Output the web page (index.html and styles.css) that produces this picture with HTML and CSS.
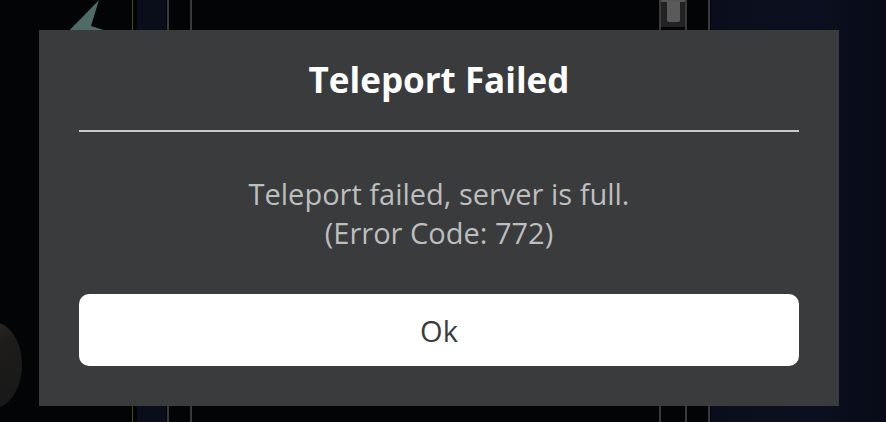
FILE: index.html
```html
<!DOCTYPE html>
<html lang="en">
<head>
<meta charset="utf-8">
<title>Teleport Failed</title>
<link rel="stylesheet" href="styles.css">
</head>
<body>
<div class="scene">
  <div class="scene-bg">
    <svg class="spike" width="60" height="40" viewBox="0 0 60 40"><polygon points="39,0 31,26 50,32 10,40 0,40" fill="#4f6b68"/></svg>
    <div class="line line-yellow"></div>
    <div class="strip strip-left"></div>
    <div class="line line-g1"></div>
    <div class="line line-g2"></div>
    <div class="box"><div class="box-inner"></div></div>
    <div class="line line-g3"></div>
    <div class="line line-g4"></div>
    <div class="strip strip-right"></div>
    <div class="hand"></div>
  </div>
  <div class="dialog" role="dialog" aria-labelledby="dlg-title">
    <h1 class="dialog-title" id="dlg-title">Teleport Failed</h1>
    <hr class="dialog-divider">
    <div class="dialog-body">
      <p class="dialog-msg">Teleport failed, server is full.<br>(Error Code: 772)</p>
    </div>
    <button class="dialog-btn" type="button">Ok</button>
  </div>
</div>
</body>
</html>
```

FILE: styles.css
```css
* { box-sizing: border-box; }
html, body { margin: 0; padding: 0; }
body {
  width: 886px;
  height: 422px;
  overflow: hidden;
  background: #030405;
  font-family: "Open Sans", "Lato", sans-serif;
}
.scene {
  position: relative;
  width: 886px;
  height: 422px;
  display: flex;
  align-items: flex-start;
  justify-content: flex-start;
  padding: 30px 0 0 39px;
}
.scene-bg {
  position: absolute;
  inset: 0;
  overflow: hidden;
}
.spike { position: absolute; left: 60px; top: 0; }
.line { position: absolute; top: 0; bottom: 0; width: 2px; }
.line-yellow { left: 132px; background: #4a4a22; width: 1px; }
.line-g1 { left: 167px; background: #3a3a3a; }
.line-g2 { left: 190px; background: #3a3a3a; }
.line-g3 { left: 685px; background: #3a3a3a; }
.line-g4 { left: 708px; background: #3a3a3a; }
.strip { position: absolute; top: 0; bottom: 0; background: #0a0d1a; }
.strip-left { left: 137px; width: 29px; }
.strip-right { left: 711px; right: 0; background: linear-gradient(90deg, #0a0e1c, #0b0f1f 60%, #080b17); }
.box {
  position: absolute;
  left: 659px; top: 0; width: 28px; height: 422px;
  border-left: 2px solid #3a3a3a;
  border-right: 2px solid #3a3a3a;
}
.box-inner {
  position: absolute; left: 0; right: 0; top: 0; height: 27px;
  background: #222;
  border-top: 2px solid #555;
}
.box-inner::after {
  content: "";
  position: absolute; left: 6px; width: 13px; top: 0; height: 20px;
  background: #5a5a5a;
  border-radius: 0 0 2px 2px;
}
.hand {
  position: absolute;
  left: -26px; top: 322px;
  width: 48px; height: 86px;
  border-radius: 40% 60% 60% 40% / 30% 50% 50% 70%;
  background: linear-gradient(160deg, #2e2b27 0%, #1d1c1b 30%, #181818 100%);
}

.dialog {
  position: relative;
  width: 800px;
  height: 376px;
  background: #393b3d;
  padding: 0 40px 40px;
  display: flex;
  flex-direction: column;
}
.dialog-title {
  margin: 0;
  height: 100px;
  line-height: 100px;
  text-align: center;
  color: #ffffff;
  font-size: 35px;
  font-weight: 700;
}
.dialog-divider {
  margin: 0;
  border: 0;
  height: 2px;
  background: #c8c9ca;
}
.dialog-body {
  flex: 1;
  display: flex;
  align-items: center;
  justify-content: center;
}
.dialog-msg {
  margin: 0;
  text-align: center;
  color: #bdbebe;
  font-size: 29px;
  line-height: 39px;
}
.dialog-btn {
  height: 72px;
  width: 100%;
  border: 0;
  border-radius: 10px;
  background: #ffffff;
  color: #393b3d;
  font-family: inherit;
  font-size: 29px;
  padding: 0;
}
```
